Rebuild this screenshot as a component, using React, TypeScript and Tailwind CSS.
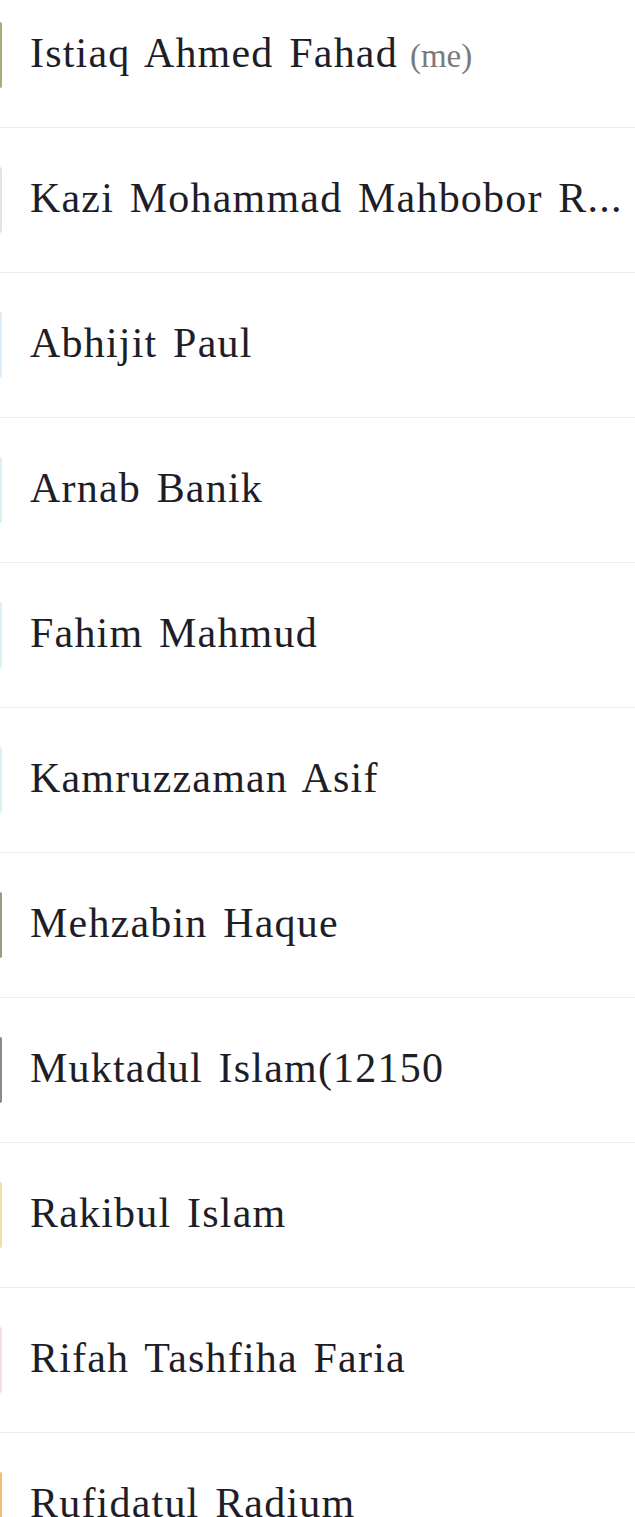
import React from "react";

const rows: { name: string; me?: boolean; color: string }[] = [
  { name: "Istiaq Ahmed Fahad", me: true, color: "#a7ad7c" },
  { name: "Kazi Mohammad Mahbobor R...", color: "#e3e3e3" },
  { name: "Abhijit Paul", color: "#d9eef8" },
  { name: "Arnab Banik", color: "#d8f1f5" },
  { name: "Fahim Mahmud", color: "#dcf0f8" },
  { name: "Kamruzzaman Asif", color: "#d9f2f5" },
  { name: "Mehzabin Haque", color: "#9e9a82" },
  { name: "Muktadul Islam(12150", color: "#8a8a8a" },
  { name: "Rakibul Islam", color: "#f4dea3" },
  { name: "Rifah Tashfiha Faria", color: "#f5e0ea" },
  { name: "Rufidatul Radium", color: "#ecc07a" },
];

export default function App() {
  return (
    <div
      className="w-[635px] h-[1517px] overflow-hidden bg-white"
      style={{ fontFamily: '"Liberation Serif", serif' }}
    >
      <div className="mt-[-17px] flex flex-col">
        {rows.map((r, i) => (
          <div
            key={i}
            className="h-[145px] flex items-center border-b border-[#ececec] shrink-0"
          >
            <div
              className="w-[2px] h-[66px] rounded-r-full shrink-0"
              style={{ backgroundColor: r.color }}
            />
            <div className="ml-[28px] pr-[2px] pb-[4px] flex items-baseline min-w-0 text-[#1e1e29] text-[42px] tracking-[1.2px] [word-spacing:4px]">
              <span className="whitespace-nowrap">{r.name}</span>
              {r.me && (
                <span className="ml-[12px] text-[33px] text-[#7a7a7a] tracking-normal shrink-0">
                  (me)
                </span>
              )}
            </div>
          </div>
        ))}
      </div>
    </div>
  );
}
